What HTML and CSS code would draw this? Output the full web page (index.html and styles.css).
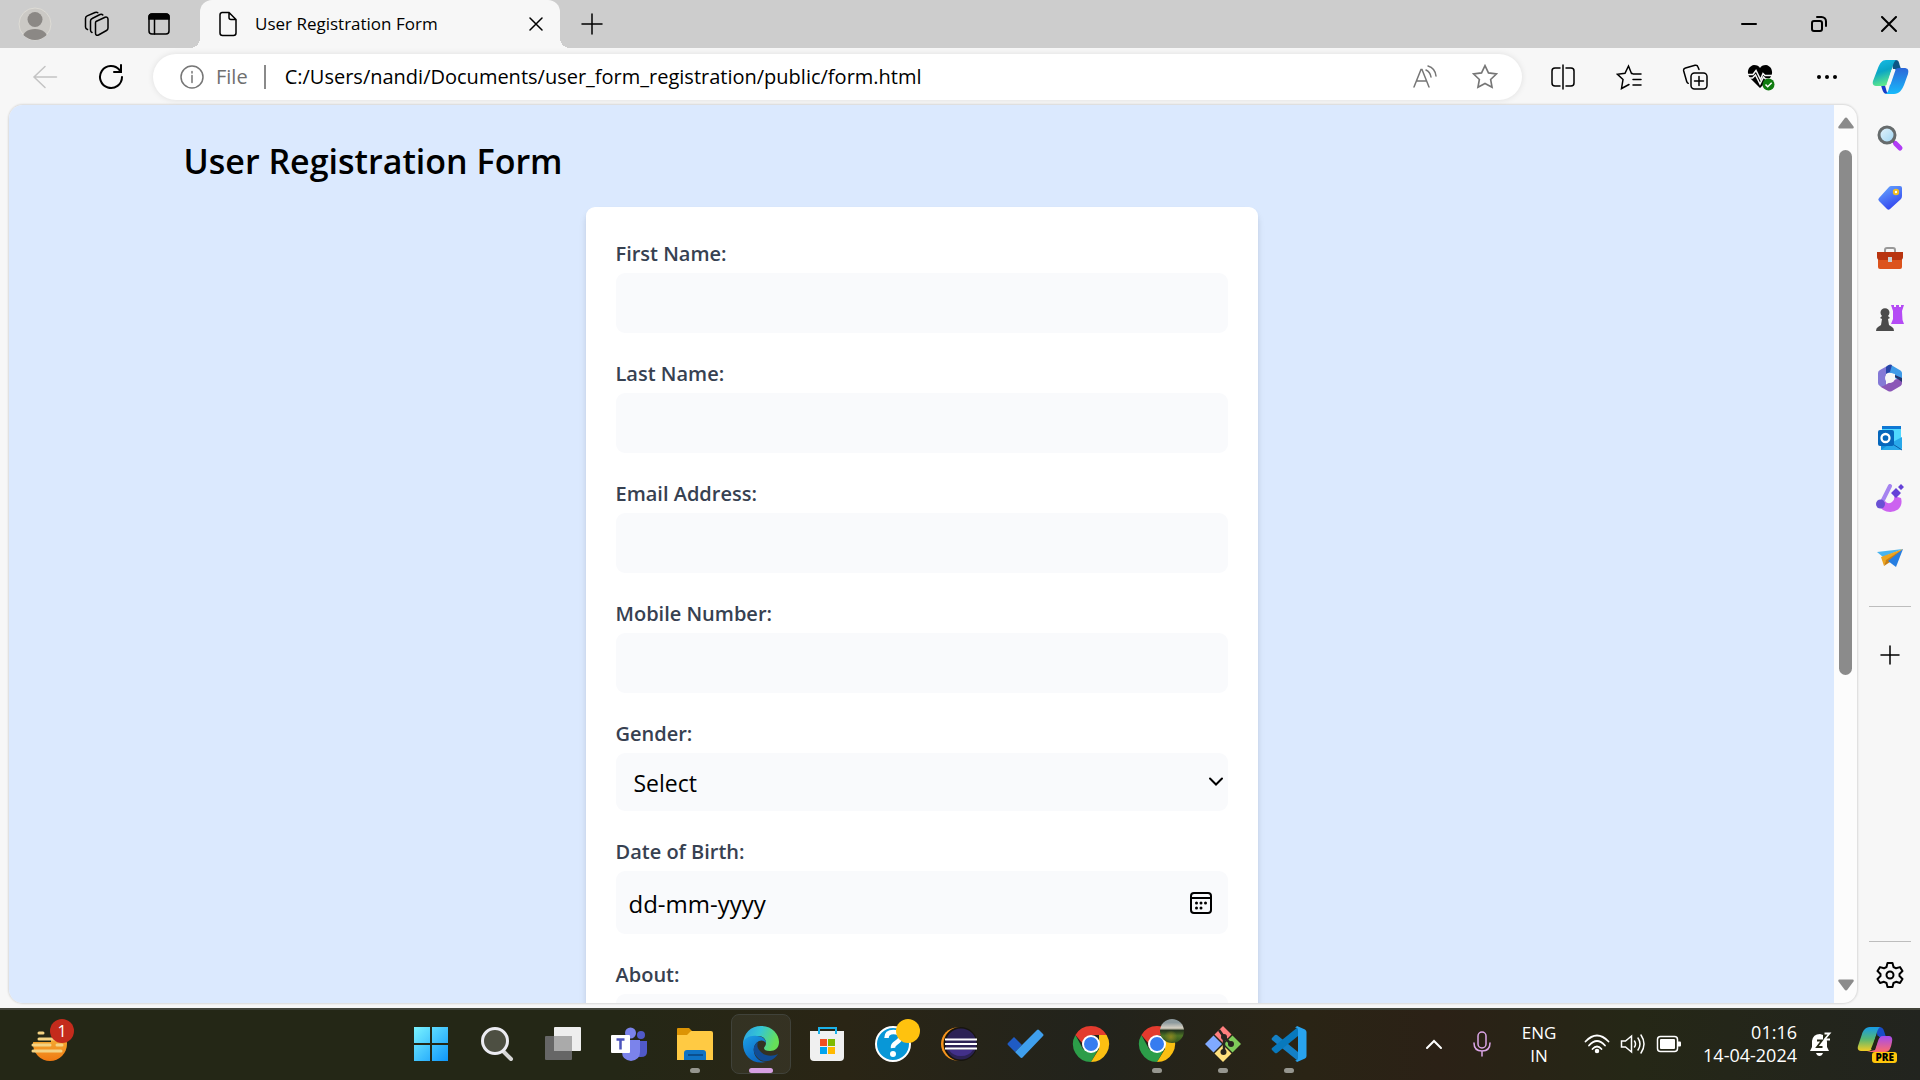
FILE: index.html
```html
<!DOCTYPE html>
<html lang="en">
<head>
<meta charset="utf-8">
<meta name="viewport" content="width=device-width, initial-scale=1">
<title>User Registration Form</title>
<link rel="stylesheet" href="styles.css">
</head>
<body>
<div class="screen">
  <header class="titlebar">
    <div class="titlebar-tools">
      <button class="icon-btn" aria-label="Profile"><svg width="34" height="34" viewBox="0 0 34 34"><defs><clipPath id="av"><circle cx="17" cy="17" r="16"/></clipPath></defs><circle cx="17" cy="17" r="16" fill="#cbc9c5" stroke="#dedcd6"/><g fill="#8b8885" clip-path="url(#av)"><circle cx="17" cy="12.500" r="7.500"/><path d="M4 34c0-8 5-12 13-12s13 4 13 12z"/></g></svg></button>
      <button class="icon-btn" aria-label="Workspaces"><svg class="line" width="26" height="26" viewBox="0 0 26 26"><path d="M12 10.500l9-4.300c1.700-.6 3 .2 3 2V17c0 1-.5 2-1.500 2.500l-8 4.500c-1.800.8-3 0-3-1.800V12c0-.8.200-1.200.5-1.500z"/><path d="M8 21.500c-1-.4-1.500-1.200-1.500-2.500V10c0-1.300.5-2 1.700-2.500L16 3.500c1.200-.5 2.200-.3 2.800.5M3.500 18.500c-1.300-.4-2-1.200-2-2.500V7.500c0-1.300.5-2 1.700-2.600L11 1.500c1.200-.5 2.200-.4 2.800.2"/></svg></button>
      <button class="icon-btn" aria-label="Tab actions"><svg class="line" width="22" height="22" viewBox="0 0 22 22"><rect x="1" y="1" width="20" height="20" rx="3"/><path d="M1 6V4a3 3 0 0 1 3-3h14a3 3 0 0 1 3 3v2z" fill="#000"/><path d="M6.500 6v15"/></svg></button>
    </div>
    <div class="tab">
      <svg class="line" width="20" height="26" viewBox="0 0 20 26"><path d="M4 1.500h7l7 7V22a2.500 2.500 0 0 1-2.500 2.500h-11A2.500 2.500 0 0 1 2 22V4a2.500 2.500 0 0 1 2-2.500zM11 2v4.500a2 2 0 0 0 2 2h5"/></svg>
      <span class="tab-title">User Registration Form</span>
      <button class="tab-close" aria-label="Close tab"><svg class="line" width="14" height="14" viewBox="0 0 14 14"><path d="M1 1l12 12M13 1L1 13"/></svg></button>
    </div>
    <button class="icon-btn new-tab" aria-label="New tab"><svg class="line" width="22" height="22" viewBox="0 0 22 22"><path d="M11 1v20M1 11h20"/></svg></button>
    <div class="window-controls">
      <button class="icon-btn" aria-label="Minimize"><svg class="line bold" width="16" height="16" viewBox="0 0 16 16"><path d="M1 8h14"/></svg></button>
      <button class="icon-btn" aria-label="Restore"><svg class="line bold" width="16" height="16" viewBox="0 0 16 16"><rect x="1" y="5" width="10" height="10" rx="2"/><path d="M6 1h4.500A4.500 4.500 0 0 1 15 5.500V10"/></svg></button>
      <button class="icon-btn" aria-label="Close"><svg class="line bold" width="16" height="16" viewBox="0 0 16 16"><path d="M1 1l14 14M15 1L1 15"/></svg></button>
    </div>
  </header>

  <nav class="toolbar">
    <button class="icon-btn" aria-label="Back"><svg class="line pale" width="26" height="24" viewBox="0 0 26 24"><path d="M13 1.500L2 12l11 10.500M2 12h22.500"/></svg></button>
    <button class="icon-btn" aria-label="Refresh"><svg class="line refresh" width="26" height="26" viewBox="0 0 26 26"><path d="M24 13A11 11 0 1 1 21.500 6M23 1v7h-7"/></svg></button>
    <div class="address">
      <svg class="line grey" width="24" height="24" viewBox="0 0 24 24"><circle cx="12" cy="12" r="11"/><path d="M12 10.500v7M12 6.500v1.500"/></svg>
      <span class="scheme">File</span>
      <input class="url" type="text" aria-label="Address" value="C:/Users/nandi/Documents/user_form_registration/public/form.html">
      <button class="address-btn" aria-label="Read aloud"><svg class="line grey" width="24" height="24" viewBox="0 0 24 24"><path d="M1 22L8 4.500h1L16 22M3.500 16h10M13 5c3 1.500 4.500 4 5 7M15 1c5 1.500 7.500 5.500 8 10"/></svg></button>
      <button class="address-btn" aria-label="Add to favorites"><svg class="line grey" width="26" height="26" viewBox="0 0 24 24"><path d="M12 1.500l3.200 6.700 7.300 1-5.300 5.100 1.300 7.200-6.500-3.500-6.500 3.500 1.300-7.200-5.300-5.100 7.300-1z"/></svg></button>
    </div>
    <button class="icon-btn tool" aria-label="Split screen"><svg class="line" width="26" height="26" viewBox="0 0 26 26"><path d="M10 4H5a3 3 0 0 0-3 3v12a3 3 0 0 0 3 3h5M16 4h5a3 3 0 0 1 3 3v12a3 3 0 0 1-3 3h-5M13 1v24"/></svg></button>
    <button class="icon-btn tool" aria-label="Favorites"><svg class="line" width="26" height="26" viewBox="0 0 26 26"><path d="M16.500 9.500h-1L12.500 2 9 9.300l-7.500 1 5.500 5.200L5.500 24.500l7.500-4M17 10h8M17 15.500h8M17 21h8"/></svg></button>
    <button class="icon-btn tool" aria-label="Collections"><svg class="line" width="26" height="26" viewBox="0 0 26 26"><rect x="9" y="9" width="16" height="16" rx="3.500"/><path d="M17 12.500v9M12.500 17h9M17 5.500L16 3a2.500 2.500 0 0 0-3-1.700L3.500 4A2.500 2.500 0 0 0 1.700 7l3 10.500c.2.800.7 1.400 1.500 1.800"/></svg></button>
    <button class="icon-btn tool" aria-label="Browser essentials"><svg width="28" height="28" viewBox="0 0 28 28"><path d="M13 25L3 15C-1 10 1 3 7 2c3 0 5 1 6 3 1-2 3-3 6-3 6 1 8 8 4 13z"/><path d="M0 11.500h6l3-4 4.500 9 2.500-6 2 2h9M0 15h5.500l3-3 4.500 9 3.500-7 2 2h8" fill="none" stroke="#f7f7f7" stroke-width="1.500"/><circle cx="21.500" cy="21.500" r="6" fill="#107c10"/><path d="M18.500 21.500l2.200 2.200 4-4" fill="none" stroke="#fff" stroke-width="1.500"/></svg></button>
    <button class="icon-btn tool" aria-label="Settings and more"><svg width="22" height="6" viewBox="0 0 22 6"><circle cx="3" cy="3" r="2"/><circle cx="11" cy="3" r="2"/><circle cx="19" cy="3" r="2"/></svg></button>
    <button class="icon-btn copilot" aria-label="Copilot"><svg width="38" height="38" viewBox="0 0 38 38"><defs><linearGradient id="c1" x2=".3" y2="1"><stop stop-color="#18bde8"/><stop offset=".5" stop-color="#0aa5c6"/><stop offset="1" stop-color="#5de88c"/></linearGradient><linearGradient id="c2" x2="0" y2="1"><stop stop-color="#2c67d8"/><stop offset="1" stop-color="#18bafb"/></linearGradient></defs><path d="M20 2h5c3 0 3 3 4 6l1 3h-8z" fill="#0c5685"/><path d="M11 27c3 0 3 0 4 4 .8 4 2 5 5 5h-4c-4 0-5-5-6-9z" fill="#163cc9"/><path d="M26 2H15c-4 0-6 3-8 8L2 23c-1 4 1 5 4 5h6c3 0 4-1 5-4l5-17c1-3 2-5 4-5z" fill="url(#c1)"/><path d="M13 36h10c5 0 8-4 10-9l4-11c1-4 0-6-4-6h-5c-3 0-4 1-5 4l-5 16c-1 4-2 6-5 6z" fill="url(#c2)"/><path d="M20.500 12h4l-5 14.500h-4z" fill="#f7f7f7"/></svg></button>
  </nav>

  <div class="browser-body">
    <div class="viewport">
      <main class="page">
        <div class="container">
          <h1>User Registration Form</h1>
          <form class="card">
            <div class="field"><label for="first">First Name:</label><input class="control" id="first" type="text"></div>
            <div class="field"><label for="last">Last Name:</label><input class="control" id="last" type="text"></div>
            <div class="field"><label for="email">Email Address:</label><input class="control" id="email" type="email"></div>
            <div class="field"><label for="mobile">Mobile Number:</label><input class="control" id="mobile" type="tel"></div>
            <div class="field"><label for="gender">Gender:</label>
              <div class="control-wrap"><select class="control select" id="gender"><option>Select</option><option>Male</option><option>Female</option><option>Other</option></select><svg class="line bold chevron" width="16" height="10" viewBox="0 0 16 10"><path d="M2 1.500l6 6 6-6"/></svg></div>
            </div>
            <div class="field"><label for="dob">Date of Birth:</label>
              <div class="control-wrap"><input class="control date" id="dob" type="text" placeholder="dd-mm-yyyy"><button type="button" class="calendar" aria-label="Open calendar"><svg width="22" height="22" viewBox="0 0 22 22"><rect x="1" y="1" width="20" height="20" rx="3" fill="none" stroke="#000" stroke-width="2"/><path d="M1 6h20" stroke="#000" stroke-width="2"/><g><circle cx="6.500" cy="11" r="1.500"/><circle cx="11" cy="11" r="1.500"/><circle cx="15.500" cy="11" r="1.500"/><circle cx="6.500" cy="16" r="1.500"/><circle cx="11" cy="16" r="1.500"/></g></svg></button></div>
            </div>
            <div class="field"><label for="about">About:</label><textarea class="control about" id="about"></textarea></div>
          </form>
        </div>
      </main>
      <div class="scrollbar">
        <svg width="16" height="12" viewBox="0 0 16 12"><path d="M6.500 1.500q1.500-2 3 0l6 8q.8 2-1 2h-13q-1.800 0-1-2z" fill="#8b8b8b"/></svg>
        <div class="track"><div class="thumb"></div></div>
        <svg width="16" height="12" viewBox="0 0 16 12"><path d="M6.500 10.500q1.500 2 3 0l6-8q.8-2-1-2h-13q-1.800 0-1 2z" fill="#8b8b8b"/></svg>
      </div>
    </div>
    <aside class="sidebar">
      <button class="side-btn" aria-label="Search"><svg width="28" height="28" viewBox="0 0 28 28"><defs><linearGradient id="ln" x2="1" y2="1"><stop stop-color="#e8f4fb"/><stop offset="1" stop-color="#9bd3f2"/></linearGradient></defs><path d="M17 17l4 4" stroke="#555" stroke-width="3"/><path d="M19.500 19.500l4.500 4.500" stroke="#b13cf5" stroke-width="5" stroke-linecap="round"/><circle cx="11" cy="11" r="8" fill="url(#ln)" stroke="#666b6c" stroke-width="3"/></svg></button>
      <button class="side-btn" aria-label="Shopping"><svg width="28" height="28" viewBox="0 0 28 28"><defs><linearGradient id="tg" x2=".5" y2="1"><stop stop-color="#69adff"/><stop offset="1" stop-color="#3447ef"/></linearGradient></defs><path d="M15 2h9q2 0 2 2v8q0 2-1.500 3.500L14 25q-1.500 1.500-3 0l-8-8q-1.500-1.500 0-3L13 3q1-1 2-1z" fill="url(#tg)"/><circle cx="20" cy="8" r="2.200" fill="#fff" stroke="#f2bd22" stroke-width="2"/></svg></button>
      <button class="side-btn" aria-label="Tools"><svg width="28" height="28" viewBox="0 0 28 28"><path d="M9 9V6q0-2 2-2h6q2 0 2 2v3" fill="none" stroke="#999" stroke-width="2"/><rect x="2" y="13" width="24" height="12" rx="2" fill="#dc531d"/><path d="M1 8h26v5q0 3-3 3H4q-3 0-3-3z" fill="#b93511"/><rect x="12" y="13" width="4" height="5" fill="#cbd0d3"/></svg></button>
      <button class="side-btn" aria-label="Games"><svg width="28" height="28" viewBox="0 0 28 28"><path d="M15 1h3v2h2V1h3v2h2V1h3l-2 6 .5 9 1.500 4H15l2-5V7z" fill="#b54bf5"/><path d="M6 12a4.500 4.500 0 1 1 6 0l2 2-2 1 1 6 3 2q2 1 2 4H0q0-3 2-4l3-2 1-6-2-1z" fill="#4b4b4b"/></svg></button>
      <button class="side-btn" aria-label="Microsoft 365"><svg width="28" height="28" viewBox="0 0 28 28"><path d="M13 1L4 6Q2 7 2 9v10q0 2 2 3l4 2 2-2V9l2-2z" fill="#8479d6"/><path d="M12 1.500q2-1.200 4 0l8.500 5Q26 7.500 26 9v9l-7-4v-4l-9-2V4z" fill="#3f9be8"/><path d="M10 3v7l4-2 2-7q-2-1-4 .5z" fill="#2746a8"/><path d="M26 14v5q0 2-1.500 3L16 27q-2 1-4 0l-8-4.500q3 .5 6-2l9-5z" fill="#8b57b7"/><path d="M19 13l7 5v-4l-7-3z" fill="#25366f"/><circle cx="14" cy="14" r="5" fill="#f7f7f7"/></svg></button>
      <button class="side-btn" aria-label="Outlook"><svg width="28" height="28" viewBox="0 0 28 28"><rect x="6" y="2" width="19" height="16" fill="#50d9ff"/><path d="M6 2h19v3H6z" fill="#0f78d4"/><path d="M5 10h11v16H5z" fill="#148fdc"/><path d="M26 13v11q0 2-2 2H5l10-7z" fill="#28a8ea"/><path d="M15 19l11 7" stroke="#0b5fa8"/><rect x="2" y="6" width="16" height="16" rx="2" fill="#0667bc"/><circle cx="9.500" cy="14" r="4" fill="none" stroke="#fff" stroke-width="2.300"/></svg></button>
      <button class="side-btn" aria-label="Designer"><svg width="28" height="28" viewBox="0 0 28 28"><path d="M9 17q3 4 7 1 3-2 2-6l7 2q2 7-3 11.500-5 3.500-11.500 2Q5 26 4 22z" fill="#cc63f0"/><path d="M14 2L6 18" stroke="#a583f0" stroke-width="4" stroke-linecap="round"/><circle cx="4.500" cy="20" r="4.500" fill="#6a51d4"/><path d="M20 4l5 5-5 5-5-5zM25 0l3 3-3 3-3-3z" fill="#6541d7"/></svg></button>
      <button class="side-btn" aria-label="Drop"><svg width="28" height="28" viewBox="0 0 28 28"><path d="M1 8L27 5 7 13z" fill="#48b4ef"/><path d="M27 5L5 13l3 9 2-5z" fill="#eda51f"/><path d="M27 5L10 16l-2 6 6-4z" fill="#c97f12"/><path d="M27 5L12 17l8 6z" fill="#267ee1"/></svg></button>
      <hr>
      <button class="side-btn add" aria-label="Customize"><svg class="line" width="20" height="20" viewBox="0 0 20 20"><path d="M10 1v18M1 10h18"/></svg></button>
      <hr class="bottom-rule">
      <button class="side-btn" aria-label="Settings"><svg class="line bold" width="28" height="28" viewBox="0 0 28 28"><path d="M11.500 2h5l1 4 2.500 1.300 4-1.200L26.500 10l-3 3v2l3 3-2.500 4-4-1.200L17.500 22l-1 4h-5l-1-4L8 20.800 4 22 1.500 18l3-3v-2l-3-3L4 6.100l4 1.200L10.500 6z" stroke-linejoin="round"/><circle cx="14" cy="14" r="3.500"/></svg></button>
    </aside>
  </div>

  <footer class="taskbar">
    <div class="weather"><button class="task-btn badge-host" aria-label="Widgets"><svg width="38" height="38" viewBox="0 0 38 38"><defs><linearGradient id="sn" x2="0" y2="1"><stop stop-color="#f6c443"/><stop offset="1" stop-color="#f07a12"/></linearGradient></defs><circle cx="19" cy="19" r="17" fill="url(#sn)"/><path d="M0 0h38v13H0zM0 13h20v4H0z" fill="#242716"/><path d="M8 8h4M8 14h26M2 20h17M26 20h5M2 26h28" stroke="#f4d383" stroke-width="3" stroke-linecap="round"/></svg><span class="badge">1</span></button></div>
    <div class="apps">
      <button class="task-btn" aria-label="Start"><svg width="36" height="36" viewBox="0 0 36 36"><defs><linearGradient id="wn" gradientUnits="userSpaceOnUse" x2="36" y2="36"><stop stop-color="#7df6ff"/><stop offset="1" stop-color="#0b94fb"/></linearGradient></defs><path d="M1 1h16v16H1zM19 1h16v16H19zM1 19h16v16H1zM19 19h16v16H19z" fill="url(#wn)"/></svg></button>
      <button class="task-btn" aria-label="Search"><svg width="36" height="36" viewBox="0 0 36 36"><path d="M24 25l8 8" stroke="#d6d6d6" stroke-width="4" stroke-linecap="round"/><circle cx="16" cy="15" r="12.500" fill="#4d4f42" stroke="#ececf2" stroke-width="3"/></svg></button>
      <button class="task-btn" aria-label="Task view"><svg width="38" height="36" viewBox="0 0 38 36"><rect x="1" y="10" width="27" height="24" rx="1" fill="#666"/><rect x="10" y="1" width="27" height="24" rx="1" fill="#eee"/><path d="M10 10h18v15H10z" fill="#aaa"/></svg></button>
      <button class="task-btn" aria-label="Teams"><svg width="38" height="36" viewBox="0 0 38 36"><circle cx="31" cy="9" r="4" fill="#5059c9"/><path d="M27 15h10v11q0 5-6 5h-5z" fill="#5059c9"/><circle cx="20.500" cy="7" r="5.500" fill="#7b83eb"/><path d="M12 14h18v12q0 8-9 9-9-1-9-9z" fill="#7b83eb"/><rect x="1" y="9" width="19" height="18" rx="1" fill="#fff"/><path d="M6.500 13.500h8M10.500 13.500v10" stroke="#4b53bc" stroke-width="2.500"/></svg></button>
      <button class="task-btn running" aria-label="File Explorer"><svg width="38" height="36" viewBox="0 0 38 36"><path d="M1 8V3q0-1 1-1h11l4 4v4H1z" fill="#dc9404"/><path d="M15 5h20q2 0 2 2v27H1V9h10z" fill="#ffca43"/><path d="M8 34V27q0-3 3-3h16q3 0 3 3v7z" fill="#0f73c4"/><path d="M12 29h15" stroke="#0a4f8e" stroke-width="2"/></svg></button>
      <button class="task-btn active" aria-label="Microsoft Edge"><svg width="38" height="38" viewBox="0 0 38 38"><defs><linearGradient id="e1" x1="0" x2="1" y2=".3"><stop stop-color="#2a9ee5"/><stop offset=".5" stop-color="#35c6d4"/><stop offset="1" stop-color="#66e058"/></linearGradient><linearGradient id="e2" x2=".6" y2="1"><stop stop-color="#1c9fe5"/><stop offset="1" stop-color="#0b65c1"/></linearGradient></defs><path d="M1 20C1 8 9 1 19 1c11 0 18 8 18 16 0 6-4 9-9 9-4 0-6-1-6-3 0-1 2-2 2-5 0-4-3-7-8-7C9 11 3 14 1 20z" fill="url(#e1)"/><path d="M1 19c1-6 7-9 14-8 5 0 9 3 9 7-2-3-5-3-7-2-4 2-6 6-5 11 1 6 6 10 12 10C11 40 1 31 1 19z" fill="url(#e2)"/><path d="M16 17c-5 3-6 10-1 15 5 6 15 6 21-3-6 3-14 2-18-3-3-3-3-6-2-9z" fill="#114c94"/></svg></button>
      <button class="task-btn" aria-label="Microsoft Store"><svg width="36" height="36" viewBox="0 0 36 36"><path d="M1 5h34v26q0 4-4 4H5q-4 0-4-4z" fill="#f0f0f0"/><path d="M10 8V2h17v6" fill="none" stroke="#1bb2ea" stroke-width="2"/><path d="M11 13h7v7h-7z" fill="#f25022"/><path d="M19 13h7v7h-7z" fill="#7fba00"/><path d="M11 21h7v7h-7z" fill="#00a4ef"/><path d="M19 21h7v7h-7z" fill="#ffb900"/></svg></button>
      <button class="task-btn badge-host" aria-label="Get Help"><svg width="38" height="38" viewBox="0 0 38 38"><circle cx="19" cy="19" r="17" fill="#0897d7" stroke="#fff" stroke-width="2"/><path d="M12.500 13q0-6 7-6t7 5q0 3-4 5.500t-3.500 5.500" fill="none" stroke="#fff" stroke-width="4.500"/><circle cx="19" cy="29" r="3" fill="#fff"/></svg><span class="badge dot"></span></button>
      <button class="task-btn" aria-label="Eclipse"><svg width="38" height="38" viewBox="0 0 38 38"><circle cx="17.500" cy="19" r="16.500" fill="#f7941e"/><circle cx="20.500" cy="19" r="17" fill="#17150f"/><circle cx="21" cy="19" r="15.500" fill="#2c2255"/><path d="M9 25h24q-4 6-12 6T9 25z" fill="#42308a"/><path d="M5 14.500h32M5 19h32M5 23.500h32" stroke="#fff" stroke-width="2.200"/></svg></button>
      <button class="task-btn" aria-label="To Do"><svg width="38" height="38" viewBox="0 0 38 38"><path d="M8 12l8 8-7 7-7-7q-1-1 0-2z" fill="#1f5bc4"/><path d="M9 27L31 5q1-1 2 0l4 4q1 1 0 2L17 32q-1.500 2-3 0z" fill="#3f9fed"/></svg></button>
      <button class="task-btn" aria-label="Chrome"><svg width="38" height="38" viewBox="0 0 38 38"><path d="M3.400 10A18 18 0 0 0 19 37l8-14-8 4-8-3z" fill="#2c9d49"/><path d="M34.600 10A18 18 0 0 1 19 37l8-13V10z" fill="#fbbf12"/><path d="M3.400 10a18 18 0 0 1 31.200 0H19l-8 9z" fill="#e33b2e"/><circle cx="19" cy="19" r="9" fill="#fff"/><circle cx="19" cy="19" r="7" fill="#367cf0"/></svg></button>
      <button class="task-btn running badge-host" aria-label="Chrome profile"><svg width="38" height="38" viewBox="0 0 38 38"><path d="M3.400 10A18 18 0 0 0 19 37l8-14-8 4-8-3z" fill="#2c9d49"/><path d="M34.600 10A18 18 0 0 1 19 37l8-13V10z" fill="#fbbf12"/><path d="M3.400 10a18 18 0 0 1 31.200 0H19l-8 9z" fill="#e33b2e"/><circle cx="19" cy="19" r="9" fill="#fff"/><circle cx="19" cy="19" r="7" fill="#367cf0"/></svg><span class="badge photo"></span></button>
      <button class="task-btn running" aria-label="Git"><svg width="38" height="38" viewBox="0 0 38 38"><path d="M19 1l8.500 8.500L19 18l-8.500-8.500z" fill="#ff7f7f"/><path d="M9.500 10.500L18 19l-8.500 8.500L1 19z" fill="#80aaff"/><path d="M28.500 10.500L37 19l-8.500 8.500L20 19z" fill="#7fcc5a"/><path d="M19 20l8.500 8.500L19 37l-8.500-8.500z" fill="#ffe07e"/><path d="M15 5l5 7v15M20 12l7 7" stroke="#282520" stroke-width="2.500" fill="none"/><circle cx="20" cy="12" r="3" fill="#282520"/><circle cx="27" cy="19" r="3" fill="#282520"/><circle cx="19.500" cy="27" r="3" fill="#282520"/></svg></button>
      <button class="task-btn running" aria-label="Visual Studio Code"><svg width="38" height="38" viewBox="0 0 38 38"><path d="M2 13l3-3q1-.7 2 0l21 17v9L2 15q-1-1 0-2z" fill="#1480c5"/><path d="M2 25l3 3q1 .7 2 0l21-17V2L2 23q-1 1 0 2z" fill="#0879bd"/><path d="M27 1l8 3.500q1.500 1 1.500 2.500v24q0 1.500-1.500 2.500l-8 3.500-2-2q3 1 3-2V5q0-3-3-2z" fill="#28a3ef"/></svg></button>
    </div>
    <div class="tray">
      <button class="tray-btn" aria-label="Hidden icons"><svg class="line light bold" width="18" height="12" viewBox="0 0 18 12"><path d="M2 10l7-7 7 7"/></svg></button>
      <button class="tray-btn mic" aria-label="Microphone"><svg class="line lilac" width="18" height="26" viewBox="0 0 18 26"><rect x="5" y="1" width="8" height="16" rx="4"/><path d="M1 12q0 8 8 8t8-8M9 20v5"/></svg></button>
      <button class="tray-btn lang">ENG<br>IN</button>
      <button class="tray-btn status" aria-label="Network, sound and battery">
        <svg class="line light" width="26" height="20" viewBox="0 0 26 20"><path d="M1.500 7.500q11.500-12 23 0M5 11.500q8-9 16 0M8.500 15q4.500-5 9 0" stroke-width="1.800"/><circle cx="13" cy="17" r="1.500" fill="#fff"/></svg>
        <svg class="line light" width="26" height="22" viewBox="0 0 26 22"><path d="M1.500 8v6h4l6 5V3l-6 5zM14.500 8q2 3 0 6M18 5q4 6 0 12M21 2q6 9 0 18"/></svg>
        <svg class="line light" width="26" height="18" viewBox="0 0 26 18"><rect x="1.500" y="1.500" width="20" height="15" rx="3"/><rect x="4" y="4" width="15" height="10" rx="1" fill="#fff" stroke="none"/><path d="M22 6.500h2q1 0 1 1v3q0 1-1 1h-2z" fill="#fff" stroke="none"/></svg>
      </button>
      <button class="tray-btn clock">01:16<br>14-04-2024</button>
      <button class="tray-btn bell" aria-label="Notifications"><svg width="24" height="26" viewBox="0 0 24 26"><path d="M1 20l2-4V10q1-7 8-7 7 1 7 8v5l2 4zM7 22h7q-1 3-3.500 3T7 22z" fill="#fff"/><path d="M14 2h7v7h-7z" fill="#242716"/><path d="M15.500 2.500h5l-5 6h5.500" fill="none" stroke="#fff" stroke-width="1.800"/><path d="M8 9.500h5l-5 6.500h5.500" fill="none" stroke="#242716" stroke-width="1.800"/></svg></button>
      <button class="tray-btn pre" aria-label="Copilot preview"><svg width="38" height="38" viewBox="0 0 38 38"><defs><linearGradient id="p1" x2="0" y2="1"><stop stop-color="#169be8"/><stop offset=".5" stop-color="#55b774"/><stop offset="1" stop-color="#f3cc24"/></linearGradient><linearGradient id="p2" x2="0" y2="1"><stop stop-color="#a34bf0"/><stop offset="1" stop-color="#ff6b6a"/></linearGradient></defs><path d="M18 2h4q4 0 5 4l2 6h-8z" fill="#194cc7"/><path d="M24 2H13C8 2 6 6 5 9L1 21c-1 4 1 5 4 5h6c3 0 4-2 5-5l4-14c1-3 2-5 4-5z" fill="url(#p1)"/><path d="M10 27h18c5 0 6-5 7-10 1-5-1-6-4-6h-5c-3 0-4 2-5 5l-3 9z" fill="url(#p2)"/><path d="M19 11h3l-4 13h-4z" fill="#242716"/></svg><span class="pre-label">PRE</span></button>
    </div>
  </footer>
</div>
</body>
</html>
```
FILE: styles.css
```css
* { box-sizing: border-box; }

body {
  margin: 0;
  font-family: "Open Sans", "Noto Sans", sans-serif;
  color: #000;
}

button,
input,
select,
textarea {
  margin: 0;
  padding: 0;
  border: 0;
  background: none;
  font: inherit;
  color: inherit;
  outline: none;
}

svg { display: block; flex: none; }

.line { fill: none; stroke: #000; stroke-width: 1.5; stroke-linecap: round; }
.bold { stroke-width: 2; }
.grey { stroke: #767676; }
.pale { stroke: #c4c4c4; }
.light { stroke: #fff; }
.lilac { stroke: #dca6e8; }
.refresh { stroke-width: 2; }

.screen {
  display: flex;
  flex-direction: column;
  height: 100vh;
  overflow: hidden;
  background: #f7f7f7;
}

.icon-btn {
  display: flex;
  flex: none;
  align-items: center;
  justify-content: center;
  width: 62px;
  height: 48px;
}

/* Title bar */
.titlebar {
  display: flex;
  flex: none;
  height: 48px;
  background: #cdcdcd;
}

.titlebar-tools { display: flex; padding: 0 10px 0 4px; }

.tab {
  position: relative;
  display: flex;
  align-items: center;
  width: 360px;
  padding: 0 16px 0 18px;
  border-radius: 12px 12px 0 0;
  background: #f7f7f7;
}

.tab::before,
.tab::after {
  content: "";
  position: absolute;
  bottom: 0;
  width: 10px;
  height: 10px;
}

.tab::before { right: 100%; background: radial-gradient(circle at 0 0, #cdcdcd 10px, #f7f7f7 10px); }
.tab::after { left: 100%; background: radial-gradient(circle at 100% 0, #cdcdcd 10px, #f7f7f7 10px); }

.tab-title { flex: 1; padding-left: 17px; font-size: 17px; line-height: 24px; }
.tab-close { padding: 1px; }
.new-tab { width: 48px; margin-left: 8px; }
.window-controls { display: flex; gap: 8px; margin-left: auto; }

/* Toolbar */
.toolbar {
  display: flex;
  flex: none;
  align-items: center;
  height: 57px;
  padding-left: 14px;
}

.toolbar > .icon-btn:nth-child(2) { margin: 0 11px 0 4px; }

.address {
  display: flex;
  flex: 1;
  align-items: center;
  height: 46px;
  margin-right: 8px;
  padding: 0 7px 0 27px;
  border-radius: 23px;
  background: #fff;
  box-shadow: 0 0 6px rgba(0, 0, 0, 0.1);
}

.scheme {
  margin: 0 19px 0 12px;
  padding-right: 16px;
  border-right: 2px solid #8a8a8a;
  font-size: 20px;
  line-height: 24px;
  color: #6f6f6f;
}

.url { flex: 1; min-width: 0; height: 32px; font-size: 20px; }
.address-btn { display: flex; justify-content: center; width: 60px; }
.toolbar > .icon-btn.tool { width: 66px; }
.toolbar > .icon-btn.copilot { width: 60px; }

/* Browser body */
.browser-body { display: flex; flex: 1; min-height: 0; }

.viewport {
  display: flex;
  flex: 1;
  min-width: 0;
  margin: 0 0 5px 9px;
  overflow: hidden;
  border-radius: 14px;
  background: #fcfcfc;
  box-shadow: 0 0 2px 1px rgba(0, 0, 0, 0.12);
}

.page { flex: 1; min-width: 0; overflow: hidden; background: #dbe9fe; }
.container { max-width: 1536px; margin: 0 auto; padding: 32px 30px; }

h1 {
  margin: 0 0 22px;
  font-size: 34px;
  font-weight: 600;
  line-height: 48px;
}

.card {
  max-width: 672px;
  margin: 0 auto;
  padding: 30px;
  border-radius: 9px;
  background: #fff;
  box-shadow: 0 6px 9px -1px rgba(0, 0, 0, 0.1), 0 3px 6px -2px rgba(0, 0, 0, 0.1);
}

.field { display: flex; flex-direction: column; margin-bottom: 24px; }
.field label { padding-bottom: 2px; font-size: 20px; font-weight: 600; line-height: 34px; color: #374151; }

.control {
  width: 100%;
  height: 60px;
  padding: 0 18px;
  border-radius: 9px;
  background: #f9fafc;
  font-size: 23px;
}

.control-wrap { position: relative; }
.select { display: block; height: 58px; padding-top: 2px; appearance: none; }
.date { display: block; height: 63px; padding: 2px 13px 0; font-size: 24px; }
.date::placeholder { color: #000; opacity: 1; }
.chevron { position: absolute; top: 24px; right: 4px; pointer-events: none; }
.calendar { position: absolute; top: 21px; right: 16px; }
.about { height: 120px; resize: none; }

.scrollbar {
  display: flex;
  flex-direction: column;
  align-items: center;
  width: 23px;
  padding: 12px 0;
}

.track { flex: 1; width: 13px; padding: 21px 0 9px; }
.thumb { height: 64%; border-radius: 7px; background: #8b8b8b; }

/* Side panel */
.sidebar {
  display: flex;
  flex: none;
  flex-direction: column;
  align-items: center;
  width: 63px;
  padding: 3px 0 3px 2px;
}

.sidebar .side-btn {
  display: flex;
  flex: none;
  align-items: center;
  justify-content: center;
  width: 60px;
  height: 60px;
}

.sidebar hr { width: 42px; margin: 18px 0; border: 0; border-top: 1px solid #bdbdbd; }
.sidebar .bottom-rule { margin: auto 0 3px; }

/* Taskbar */
.taskbar {
  display: flex;
  flex: none;
  height: 72px;
  border-top: 2px solid #42443a;
  background: linear-gradient(90deg, #242716 0 32%, #2a2515 44%, #22231c 57%, #2a2415 68%, #2b2116 75%, #252716 85%, #22241f);
  color: #fff;
}

.weather { flex: none; width: 398px; padding: 0 17px; }
.apps { display: flex; flex: none; }

.task-btn {
  position: relative;
  display: flex;
  align-items: center;
  justify-content: center;
  width: 66px;
  height: 68px;
}

.active::before {
  content: "";
  position: absolute;
  inset: 4px 3px;
  border: 1px solid #40423a;
  border-radius: 8px;
  background: rgba(255, 255, 255, 0.06);
}

.active svg { position: relative; }

.running::after,
.active::after {
  content: "";
  position: absolute;
  bottom: 5px;
  left: 50%;
  width: 10px;
  height: 5px;
  margin-left: -5px;
  border-radius: 3px;
  background: #96968f;
}

.active::after { width: 24px; margin-left: -12px; background: #d6a0e2; }

.badge {
  position: absolute;
  top: 9px;
  right: 9px;
  width: 24px;
  height: 24px;
  border-radius: 50%;
  background: #c42b1c;
  font-size: 16px;
  line-height: 24px;
  text-align: center;
}

.dot { right: 6px; background: #ffc20e; }
.photo { right: 6px; background: radial-gradient(circle at 45% 75%, #8a8520, transparent 30%), linear-gradient(#8d9a9e 15%, #d8d2c4 38%, #23331d 48%, #4d7426 70%, #31501b); }

.tray { display: flex; align-items: center; height: 68px; margin-left: auto; font-size: 17px; line-height: 23px; }
.tray-btn { display: flex; flex: none; align-items: center; justify-content: center; width: 48px; height: 68px; }
.tray .lang { display: block; width: 66px; height: 46px; }
.tray .status { gap: 10px; width: 122px; }
.tray .clock { display: block; width: 103px; height: 46px; font-size: 18px; text-align: right; }
.tray .pre { position: relative; width: 62px; margin: 0 13px 0 0; }

.pre-label {
  position: absolute;
  right: 10px;
  bottom: 15px;
  padding: 0 3px;
  border-radius: 3px;
  background: #ffc60b;
  font-size: 10px;
  font-weight: 800;
  line-height: 11px;
  color: #000;
}
```
